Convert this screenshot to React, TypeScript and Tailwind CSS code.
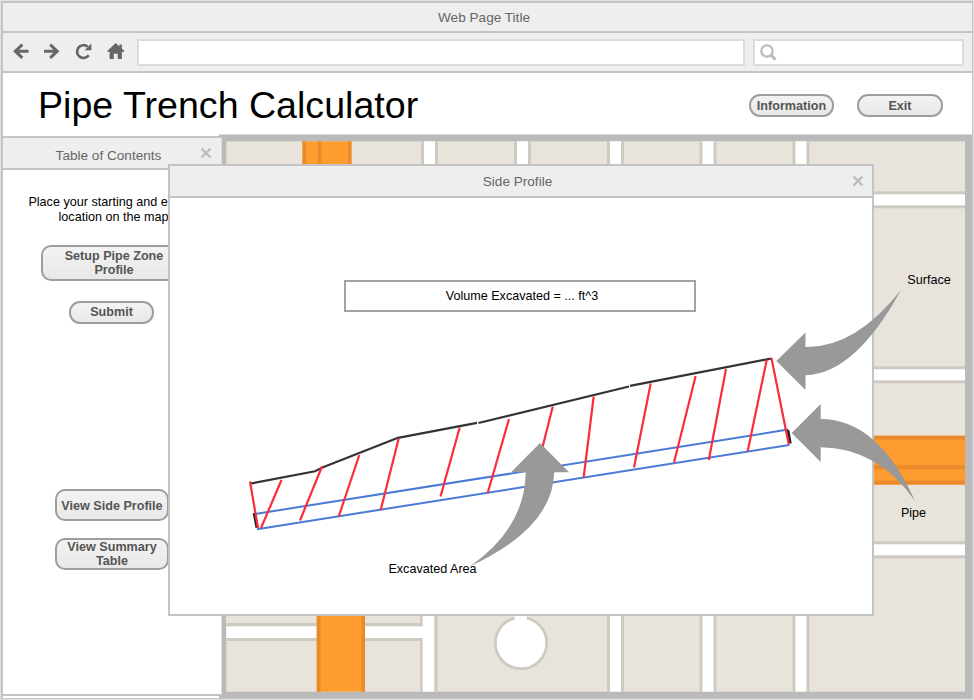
import type { ReactNode } from 'react';

const hatches = [
  [281.5, 480, 261, 528],
  [322, 466.5, 300, 520.5],
  [359.3, 455, 338.7, 516.5],
  [398.7, 438.5, 380.7, 510],
  [459.7, 427.5, 440.5, 496.5],
  [509, 419, 487.7, 493],
  [552.8, 406.5, 540, 457],
  [593.7, 396.5, 583.7, 477],
  [650.7, 383.5, 634, 467.5],
  [695.6, 376, 674, 462.5],
  [726, 369, 708.8, 460],
  [766.7, 360, 747.7, 451.3],
];

function Button({ className, children }: { className: string; children: ReactNode }) {
  return (
    <button
      className={`flex shrink-0 items-center justify-center border-2 border-[#9d9d9d] bg-gradient-to-b from-[#f3f3f3] to-[#e8e8e8] text-center text-[12.6px] leading-[14.5px] font-bold text-[#555] ${className}`}
    >
      {children}
    </button>
  );
}

function CloseIcon() {
  return (
    <svg width="12" height="12" viewBox="0 0 12 12" className="block">
      <path d="M1.5 1.5 10.5 10.5M10.5 1.5 1.5 10.5" stroke="#bdbdbd" strokeWidth="2.4" />
    </svg>
  );
}

function NavIcons() {
  return (
    <svg width="134" height="38" viewBox="3 33 134 38" className="block shrink-0" fill="none" stroke="#666" strokeWidth="3">
      <path d="M28.5 51.2H15.5M22.3 44.6 15.3 51.2 22.3 57.8" />
      <path d="M44 51.2H57M50.2 44.6 57.2 51.2 50.2 57.8" />
      <path d="M88.7 55.3A6.4 6.4 0 1 1 87.7 46.8" strokeWidth="2.7" />
      <path d="M91.4 43.5V50.3H84.6Z" fill="#666" stroke="none" />
      <path d="M115.7 43 107.2 51.1 108.3 52.3 109.6 51.4V59H113.8V53.8H117.7V59H121.9V51.4L123.2 52.3 124.4 51.1 121.8 48.6V44.5H119.4V46.4Z" fill="#666" stroke="none" />
    </svg>
  );
}

function StreetMap() {
  const edge = '#cfcac1';
  return (
    <svg width="753" height="564" viewBox="219 134 753 564" className="-ml-[2px] block shrink-0">
      <path d="M219 134.5H972V698H218V695H221.5V137H219Z" fill="#bababa" />
      <rect x="226.3" y="141.3" width="738.7" height="550.4" fill="#e8e4dc" />
      {[424, 517, 610, 702.5, 795.5].map((x) => (
        <g key={x}>
          <rect x={x - 3} y="141.3" width="17" height="80" fill={edge} />
          <rect x={x} y="141.3" width="11" height="80" fill="#fff" />
        </g>
      ))}
      {[610, 702.5, 795.5].map((x) => (
        <g key={x}>
          <rect x={x - 3} y="600" width="17" height="91.7" fill={edge} />
          <rect x={x} y="600" width="11" height="91.7" fill="#fff" />
        </g>
      ))}
      {[194.3, 369.3, 544.3].map((y) => (
        <g key={y}>
          <rect x="809" y={y - 3} width="156" height="17" fill={edge} />
          <rect x="809" y={y} width="156" height="11" fill="#fff" />
        </g>
      ))}
      <rect x="420" y="600" width="17.5" height="91.7" fill={edge} />
      <rect x="226.3" y="623" width="196" height="18" fill={edge} />
      <rect x="226.3" y="600" width="193.7" height="23" fill="#e8e4dc" />
      <rect x="422.7" y="600" width="11.6" height="91.7" fill="#fff" />
      <rect x="226.3" y="626.3" width="200" height="11.7" fill="#fff" />
      <circle cx="521" cy="643" r="25.7" fill="#fff" stroke={edge} strokeWidth="2.8" />
      <rect x="514.5" y="610" width="12.5" height="15" fill="#fff" />
      <rect x="302.5" y="141.3" width="49" height="60" fill="#ff9c2f" />
      <path d="M304.2 141.3V180M319.7 141.3V180M349.7 141.3V180" stroke="#e98b2c" strokeWidth="3.5" />
      <rect x="316.5" y="600" width="48.5" height="91.7" fill="#ff9c2f" />
      <path d="M318.7 600V691.7M363.3 600V691.7" stroke="#e98b2c" strokeWidth="3.5" />
      <rect x="840" y="435.7" width="125" height="49" fill="#ff9c2f" />
      <path d="M840 437.7H965M840 467.3H965M840 482.5H965" stroke="#e98b2c" strokeWidth="4" />
    </svg>
  );
}

function TrenchDiagram() {
  return (
    <svg width="974" height="700" viewBox="0 0 974 700" className="absolute top-0 left-0" fill="none">
      <g stroke="#333" strokeWidth="2.2">
        <path d="M250 483.7 315 471.3 323 467.3 398 437.8 477 422.8" />
        <path d="M478.5 423 629 386.5" />
        <path d="M630 385.8 771 358.6" />
      </g>
      <path d="M255 514 788 429.6M257 529.2 789.5 445" stroke="#4a7bd6" strokeWidth="2" />
      <path d="M254.2 513 257 527.8M787.8 430 790.2 443.5" stroke="#222" strokeWidth="3" />
      <g stroke="#fb2c3b" strokeWidth="2.2">
        <path d="M250 481.5 258 528M771.4 357.8 788.8 444.5" />
        {hatches.map(([x1, y1, x2, y2]) => (
          <line key={x1} x1={x1} y1={y1} x2={x2} y2={y2} />
        ))}
      </g>
      <g fill="#999">
        <path d="M776.3 361 805.5 332.5V347Q855 348 901 290Q855 374 805.5 375.2V390Z" />
        <path d="M791.7 433 820.7 404V419Q878 419 915 501Q878 448 820.7 447.3V462Z" />
        <path d="M540 443 511 472.2H525.7Q525 528 470 566.3Q553 528 554.2 472.2H569Z" />
      </g>
      <g fill="#000" fontSize="12.6" textAnchor="middle">
        <text x="929" y="284">Surface</text>
        <text x="913.5" y="517">Pipe</text>
        <text x="432.5" y="573">Excavated Area</text>
      </g>
    </svg>
  );
}

export default function App() {
  return (
    <div className="relative h-[700px] w-[974px] overflow-hidden bg-[#e0e0e0] pt-px pr-px pb-px pl-px font-['Liberation_Sans',Arial,sans-serif]">
      <div className="flex h-[698px] w-[972px] flex-col border-t-2 border-r border-b border-l-2 border-[#c4c4c4] bg-white">
        <div className="flex h-[30px] shrink-0 items-center justify-center border-b-2 border-[#c4c4c4] bg-[#eee] pt-[2px] pr-[7px] text-[13.6px] text-[#666]">
          Web Page Title
        </div>
        <div className="flex h-[40px] shrink-0 items-center border-b-2 border-[#c4c4c4] bg-[#eee]">
          <NavIcons />
          <div className="h-[27px] w-[608px] shrink-0 border-2 border-[#dcdcdc] bg-white" />
          <div className="ml-[8px] flex h-[27px] w-[211px] shrink-0 items-center border-2 border-[#dcdcdc] bg-white pl-[5px]">
            <svg width="17" height="17" viewBox="0 0 17 17" fill="none" stroke="#bbb">
              <circle cx="7" cy="7" r="5.7" strokeWidth="2.3" />
              <path d="M10.8 10.8 15.5 15.7" strokeWidth="3" />
            </svg>
          </div>
        </div>
        <div className="flex h-[61px] shrink-0 items-center pr-[29px] pl-[35px]">
          <h1 className="mt-[4px] mr-auto text-[37.6px] leading-none text-black">Pipe Trench Calculator</h1>
          <Button className="mt-[4px] h-[23px] w-[85px] rounded-[11px] pt-[2px]">Information</Button>
          <Button className="mt-[4px] ml-[23px] h-[23px] w-[86px] rounded-[11px] pt-[2px]">Exit</Button>
        </div>
        <div className="flex h-[564px] shrink-0">
          <aside className="mt-[2px] flex h-[560px] w-[218px] shrink-0 flex-col border-t-2 border-b-2 border-[#c4c4c4]">
            <div className="relative flex h-[32px] shrink-0 items-center justify-center border-b-2 border-[#c4c4c4] bg-[#eee] pt-[6px] pr-[7px] text-[13.6px] text-[#666]">
              Table of Contents
              <span className="absolute top-[9px] right-[9px]">
                <CloseIcon />
              </span>
            </div>
            <div className="flex flex-col items-start">
              <p className="mt-[25px] ml-[10px] w-[201px] text-center text-[12.6px] leading-[14.5px] text-black">
                Place your starting and ending location on the map
              </p>
              <Button className="mt-[21px] ml-[38px] h-[36px] w-[146px] rounded-[10px]">
                Setup Pipe Zone
                <br />
                Profile
              </Button>
              <Button className="mt-[20px] ml-[66px] h-[23px] w-[85px] rounded-[11px]">Submit</Button>
              <Button className="mt-[165px] ml-[52px] h-[32px] w-[114px] rounded-[10px] pt-[2px]">View Side Profile</Button>
              <Button className="mt-[17px] ml-[52px] h-[32px] w-[114px] rounded-[10px]">
                View Summary
                <br />
                Table
              </Button>
            </div>
          </aside>
          <StreetMap />
        </div>
      </div>

      <section className="absolute top-[164px] left-[168px] flex h-[452px] w-[706px] flex-col border-2 border-[#c4c4c4] bg-white">
        <div className="relative flex h-[32px] shrink-0 items-center justify-center border-b-2 border-[#c4c4c4] bg-[#eee] pt-[2px] pr-[7px] text-[13.6px] text-[#666]">
          Side Profile
          <span className="absolute top-[9px] right-[8px]">
            <CloseIcon />
          </span>
        </div>
        <div className="mt-[82px] ml-[174px] flex h-[32px] w-[352px] items-center justify-center border-2 border-[#a3a3a3] pl-[4px] text-[12.6px] text-black">
          Volume Excavated = ... ft^3
        </div>
      </section>
      <TrenchDiagram />
    </div>
  );
}
